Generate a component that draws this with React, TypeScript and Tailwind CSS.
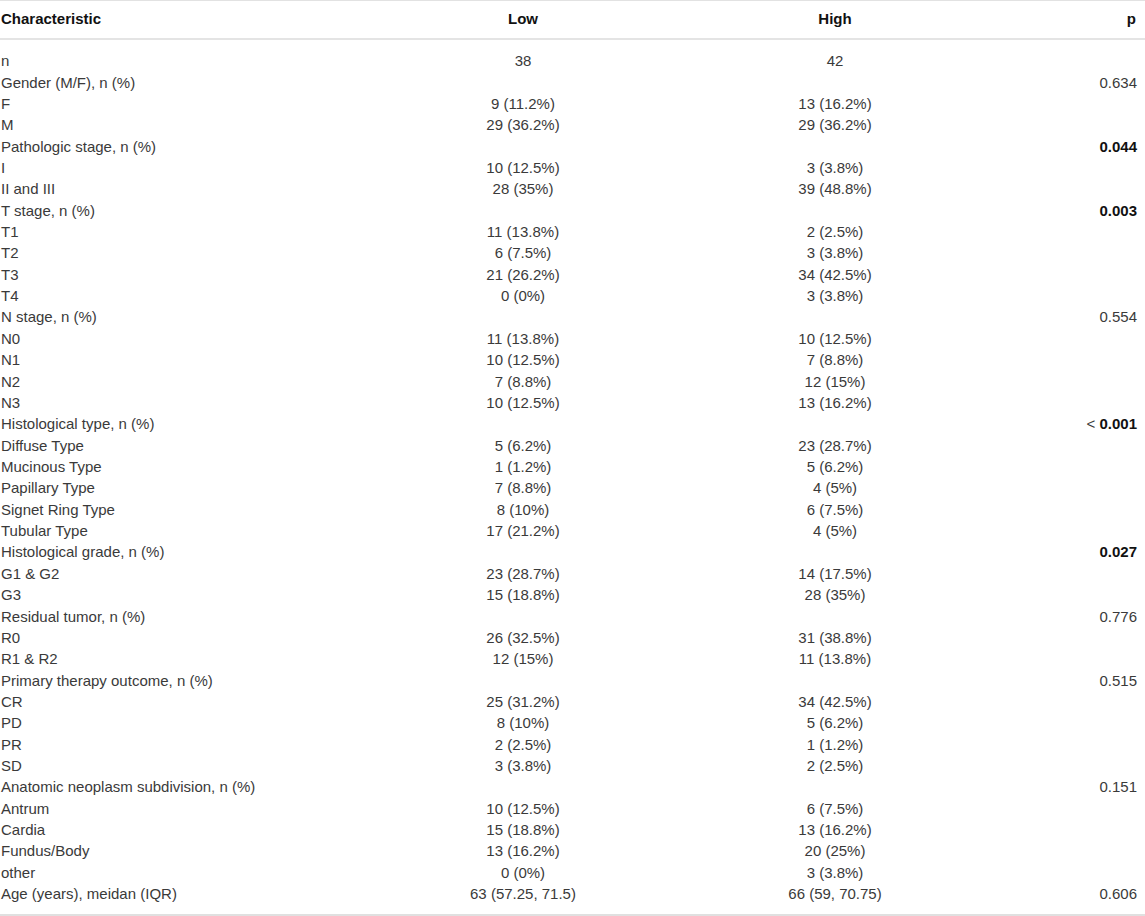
import React from "react";

type Row = { label: string; low?: string; high?: string; p?: string; bold?: boolean; lt?: boolean };

const rows: Row[] = [
  { label: "n", low: "38", high: "42" },
  { label: "Gender (M/F), n (%)", p: "0.634" },
  { label: "F", low: "9 (11.2%)", high: "13 (16.2%)" },
  { label: "M", low: "29 (36.2%)", high: "29 (36.2%)" },
  { label: "Pathologic stage, n (%)", p: "0.044", bold: true },
  { label: "I", low: "10 (12.5%)", high: "3 (3.8%)" },
  { label: "II and III", low: "28 (35%)", high: "39 (48.8%)" },
  { label: "T stage, n (%)", p: "0.003", bold: true },
  { label: "T1", low: "11 (13.8%)", high: "2 (2.5%)" },
  { label: "T2", low: "6 (7.5%)", high: "3 (3.8%)" },
  { label: "T3", low: "21 (26.2%)", high: "34 (42.5%)" },
  { label: "T4", low: "0 (0%)", high: "3 (3.8%)" },
  { label: "N stage, n (%)", p: "0.554" },
  { label: "N0", low: "11 (13.8%)", high: "10 (12.5%)" },
  { label: "N1", low: "10 (12.5%)", high: "7 (8.8%)" },
  { label: "N2", low: "7 (8.8%)", high: "12 (15%)" },
  { label: "N3", low: "10 (12.5%)", high: "13 (16.2%)" },
  { label: "Histological type, n (%)", p: "0.001", bold: true, lt: true },
  { label: "Diffuse Type", low: "5 (6.2%)", high: "23 (28.7%)" },
  { label: "Mucinous Type", low: "1 (1.2%)", high: "5 (6.2%)" },
  { label: "Papillary Type", low: "7 (8.8%)", high: "4 (5%)" },
  { label: "Signet Ring Type", low: "8 (10%)", high: "6 (7.5%)" },
  { label: "Tubular Type", low: "17 (21.2%)", high: "4 (5%)" },
  { label: "Histological grade, n (%)", p: "0.027", bold: true },
  { label: "G1 & G2", low: "23 (28.7%)", high: "14 (17.5%)" },
  { label: "G3", low: "15 (18.8%)", high: "28 (35%)" },
  { label: "Residual tumor, n (%)", p: "0.776" },
  { label: "R0", low: "26 (32.5%)", high: "31 (38.8%)" },
  { label: "R1 & R2", low: "12 (15%)", high: "11 (13.8%)" },
  { label: "Primary therapy outcome, n (%)", p: "0.515" },
  { label: "CR", low: "25 (31.2%)", high: "34 (42.5%)" },
  { label: "PD", low: "8 (10%)", high: "5 (6.2%)" },
  { label: "PR", low: "2 (2.5%)", high: "1 (1.2%)" },
  { label: "SD", low: "3 (3.8%)", high: "2 (2.5%)" },
  { label: "Anatomic neoplasm subdivision, n (%)", p: "0.151" },
  { label: "Antrum", low: "10 (12.5%)", high: "6 (7.5%)" },
  { label: "Cardia", low: "15 (18.8%)", high: "13 (16.2%)" },
  { label: "Fundus/Body", low: "13 (16.2%)", high: "20 (25%)" },
  { label: "other", low: "0 (0%)", high: "3 (3.8%)" },
  { label: "Age (years), meidan (IQR)", low: "63 (57.25, 71.5)", high: "66 (59, 70.75)", p: "0.606" },
];

const cols = "grid grid-cols-[367px_312px_312px_1fr]";

export default function App() {
  return (
    <div className="w-[1145px] h-[916px] bg-white text-[15px] text-[#3a3a3a] font-['Liberation_Sans',Arial,sans-serif]">
      <div className="border-t border-[#e2e2e2]">
        {/* header */}
        <div className={`${cols} h-[39px] items-center border-b-2 border-[#e4e4e4] font-bold text-[#111]`}>
          <span className="pl-px">Characteristic</span>
          <span className="text-center">Low</span>
          <span className="text-center">High</span>
          <span className="text-right pr-[9px]">p</span>
        </div>

        {/* body */}
        <div className="pt-[10px] pb-[10px] border-b-2 border-[#e0e0e0]">
          {rows.map((r) => (
            <div key={r.label} className={`${cols} h-[21.36px] items-center leading-none`}>
              <span className="pl-px">{r.label}</span>
              <span className="text-center">{r.low}</span>
              <span className="text-center">{r.high}</span>
              <span className="text-right pr-[8px]">
                {r.lt && <span>&lt; </span>}
                <span className={r.bold ? "font-bold text-[#111]" : ""}>{r.p}</span>
              </span>
            </div>
          ))}
        </div>
      </div>
    </div>
  );
}
